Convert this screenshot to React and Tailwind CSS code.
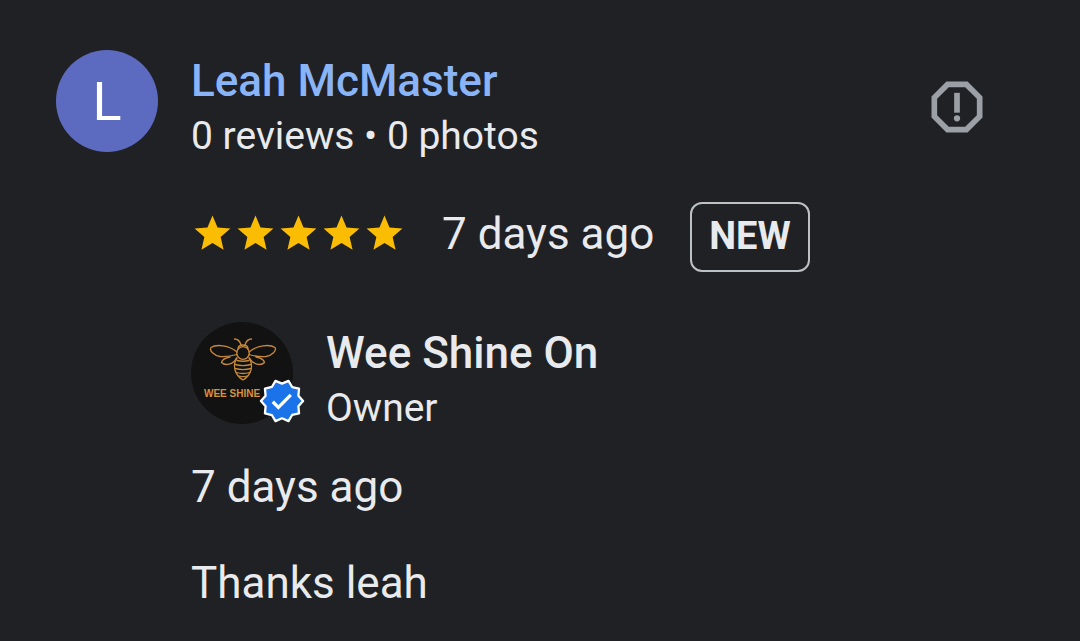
const STARS = [1, 2, 3, 4, 5];

function Star() {
  return (
    <svg viewBox="0 0 24 24" className="size-[43px]" fill="#fbbc04" aria-hidden="true">
      <path d="M12 17.27 18.18 21l-1.64-7.03L22 9.24l-7.19-.61L12 2 9.19 8.63 2 9.24l5.46 4.73L5.82 21z" />
    </svg>
  );
}

function ReportIcon() {
  return (
    <svg viewBox="0 0 24 24" className="size-[68px]" fill="#9aa0a6" aria-hidden="true">
      <path d="M15.73 3H8.27L3 8.27v7.46L8.27 21h7.46L21 15.73V8.27L15.73 3zM19 14.9 14.9 19H9.1L5 14.9V9.1L9.1 5h5.8L19 9.1v5.8z" />
      <circle cx="12" cy="16" r="1.1" />
      <path d="M11 7h2v7h-2z" />
    </svg>
  );
}

function Bee() {
  return (
    <svg viewBox="0 0 70 44" className="h-11 w-[70px]" fill="none" stroke="#c8893a" strokeWidth="1.3" strokeLinecap="round" strokeLinejoin="round" aria-hidden="true">
      <path d="M27.5 1c4 0 5.5 2.5 6.5 6M44.5 1c-4 0-5.5 2.5-6.5 6" />
      <path d="M31 11c0-3 2-4 5-4s5 1 5 4" />
      <circle cx="36" cy="15" r="6.3" />
      <path d="M30 14C22 7 9 6 4 9.5c-2 3 3 8 9 9 6 .5 12-.5 17-2" />
      <path d="M42 14c8-7 21-8 26-4.5 2 3-3 8-9 9-6 .5-12-.5-17-2" />
      <path d="M23 19c-5 1-8 3-8.5 5.5C18 28 26 27 29.5 20" />
      <path d="M49 19c5 1 8 3 8.5 5.5C54 28 46 27 42.5 20" />
      <path d="M30 20c-5 7-2.5 17 6 22 8.5-5 11-15 6-22" />
      <path d="M30 22.5c4 1 8 1 12 0M28 26.5c5 1.3 11 1.3 16 0M28 30.5c5 1.3 11 1.3 16 0M29.5 34.5c4 1.2 9 1.2 13 0M32 38c3 1 5 1 8 0" />
    </svg>
  );
}

function VerifiedBadge() {
  return (
    <svg viewBox="0 0 24 24" className="absolute -right-3 bottom-0 size-[46px]" role="img" aria-label="Verified">
      <path
        d="M23 12l-2.44-2.79.34-3.69-3.61-.82-1.89-3.2L12 2.96 8.6 1.5 6.71 4.69 3.1 5.5l.34 3.7L1 12l2.44 2.79-.34 3.7 3.61.82L8.6 22.5l3.4-1.47 3.4 1.46 1.89-3.19 3.61-.82-.34-3.69z"
        fill="#1a73e8"
        stroke="#fff"
        strokeWidth="1.2"
        strokeLinejoin="round"
      />
      <path d="M7.2 12.4l2.9 2.9 6.5-6.5" fill="none" stroke="#fff" strokeWidth="1.7" />
    </svg>
  );
}

function Person({ avatar, name, detail }) {
  return (
    <div className="flex min-w-0 flex-1 gap-[33px]">
      {avatar}
      <div className="pt-[3px]">
        <h2 className="text-[44px] leading-14 font-medium">{name}</h2>
        <p className="text-[39px] leading-[54px]">{detail}</p>
      </div>
    </div>
  );
}

export default function App() {
  return (
    <main className="min-h-screen bg-[#202124] pt-[50px] pr-[89px] pb-7 pl-14 font-['Roboto',sans-serif] text-[#e8eaed]">
      <article>
        <header className="flex items-start justify-between">
          <Person
            avatar={
              <div className="flex size-[102px] shrink-0 items-center justify-center rounded-full bg-[#5c6bc0] text-[54px] text-white">
                L
              </div>
            }
            name={<a href="#leah" className="text-[#8ab4f8]">Leah McMaster</a>}
            detail="0 reviews • 0 photos"
          />
          <button type="button" aria-label="Report review" className="mt-[23px]">
            <ReportIcon />
          </button>
        </header>

        <div className="ml-[135px]">
          <div className="mt-[39px] flex items-start">
            <div className="mt-[10px] flex" role="img" aria-label="5 out of 5 stars">
              {STARS.map((n) => (
                <Star key={n} />
              ))}
            </div>
            <time className="ml-9 text-[44px] leading-16">7 days ago</time>
            <span className="ml-9 flex h-[70px] items-center rounded-xl border-2 border-[#bdc1c6] px-[17px] pb-0.5 text-[38px] font-bold">
              NEW
            </span>
          </div>

          <section className="mt-[50px]">
            <Person
              avatar={
                <div className="relative flex size-[102px] shrink-0 flex-col items-center rounded-full bg-[#121212] pt-4">
                  <Bee />
                  <span className="self-start pl-[13px] font-['Liberation_Sans',sans-serif] text-[10px] leading-6 font-bold text-[#d8923c]">
                    WEE SHINE
                  </span>
                  <VerifiedBadge />
                </div>
              }
              name="Wee Shine On"
              detail="Owner"
            />
            <p className="mt-6 text-[44px] leading-14">
              <time>7 days ago</time>
            </p>
            <p className="mt-10 text-[44px] leading-14">Thanks leah</p>
          </section>
        </div>
      </article>
    </main>
  );
}
